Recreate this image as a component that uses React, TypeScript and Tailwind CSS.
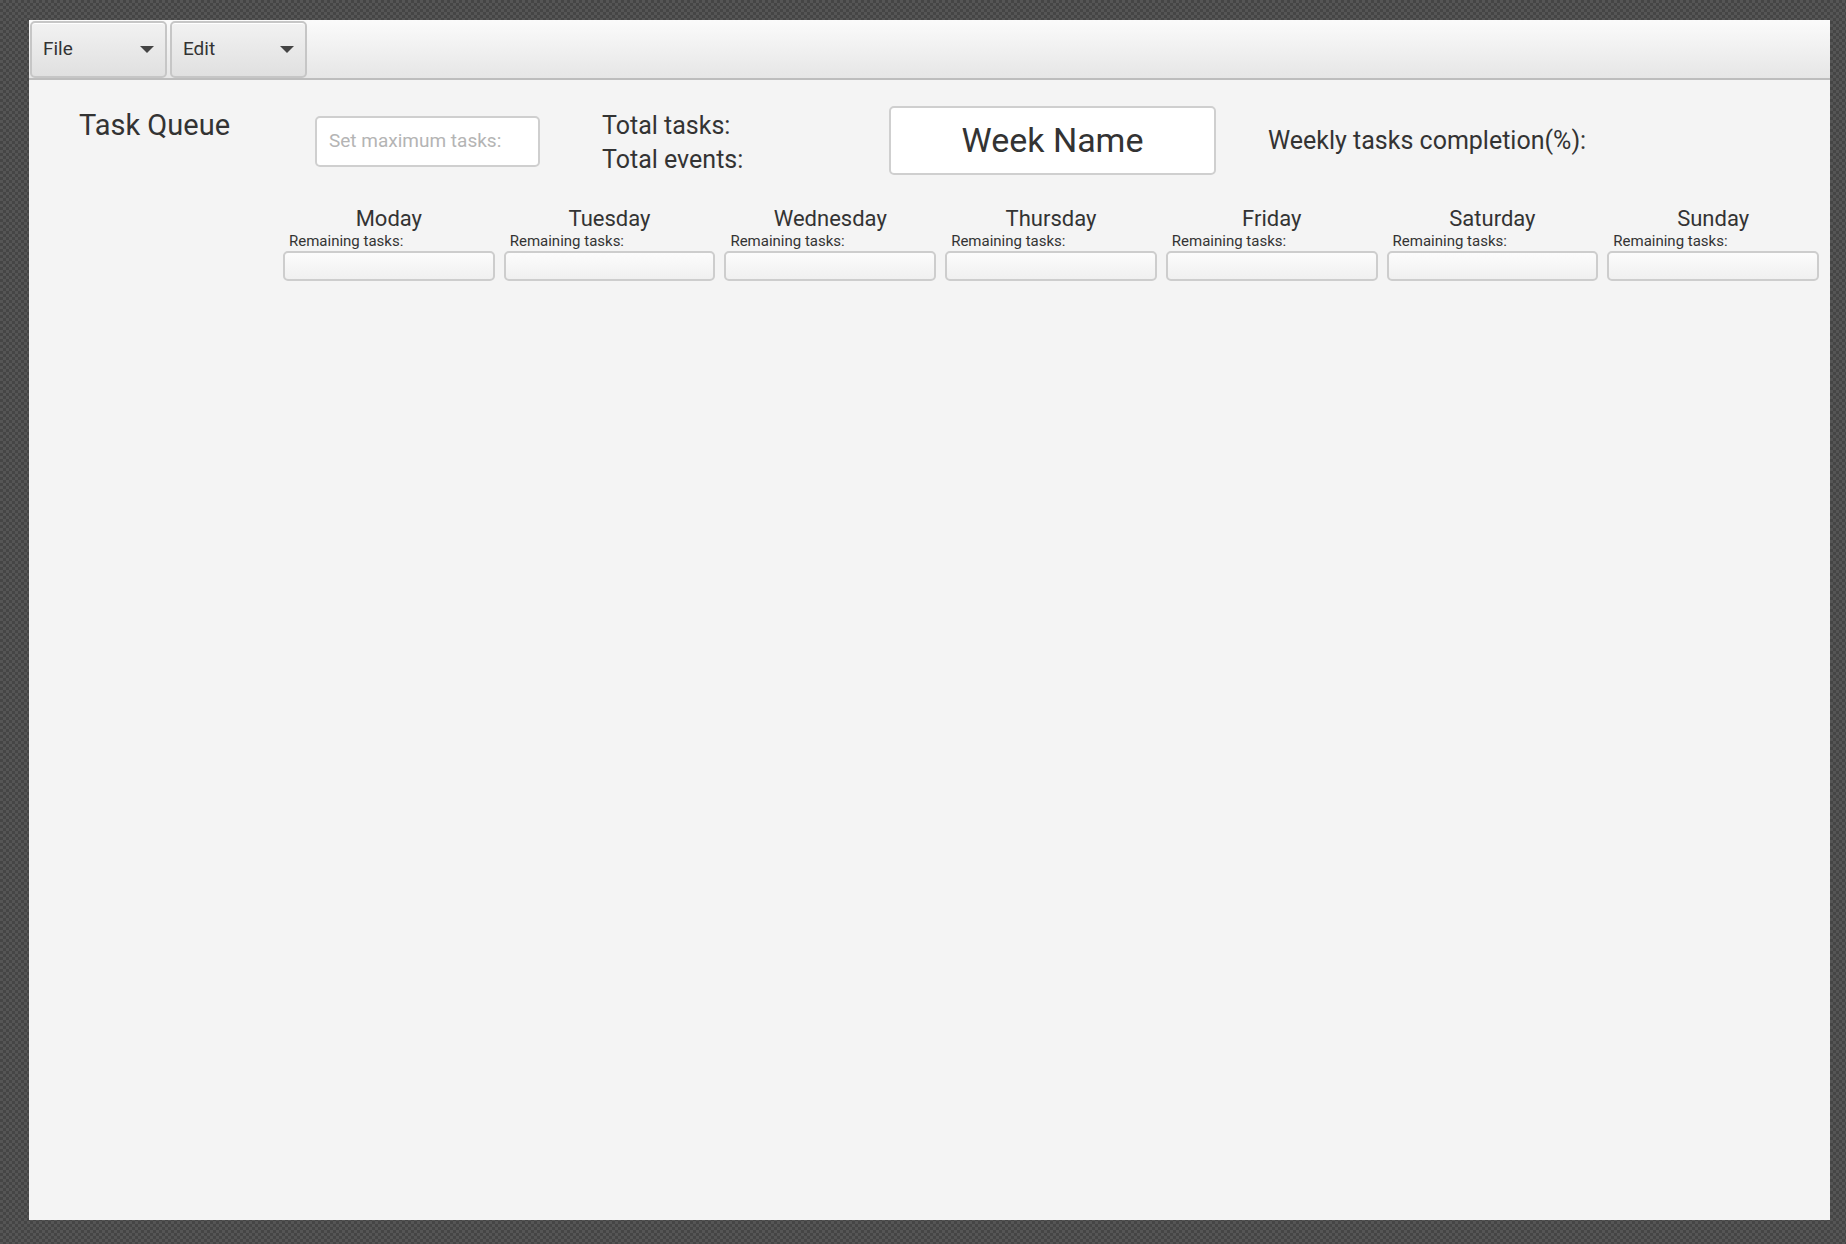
import React from 'react';

const days = ['Moday', 'Tuesday', 'Wednesday', 'Thursday', 'Friday', 'Saturday', 'Sunday'];

function MenuButton({ label }: { label: string }) {
  return (
    <div className="w-[137px] h-[57px] rounded-[5px] border-2 border-[#c6c6c6] bg-gradient-to-b from-[#f2f2f2] to-[#e0e0e0] flex items-center justify-between pl-[11px] pr-[11px] shadow-[inset_0_1px_0_#ffffff]">
      <span className="text-[19px] text-[#333]">{label}</span>
      <svg width="14" height="7" viewBox="0 0 14 7">
        <path d="M0 0 L14 0 L7 7 Z" fill="#444" />
      </svg>
    </div>
  );
}

export default function App() {
  return (
    <div className="w-[1846px] h-[1244px] pt-[20px] pl-[29px] bg-[#4b4b4b] bg-[repeating-conic-gradient(#454545_0%_25%,#555555_0%_50%)] bg-[length:6px_6px] font-['Roboto',sans-serif] text-[#333]">
      <div className="w-[1801px] h-[1200px] flex flex-col bg-[#f4f4f4]">
        {/* menu bar */}
        <div className="h-[60px] flex items-start gap-[3px] pt-[1px] pl-[1px] bg-gradient-to-b from-[#fbfbfb] to-[#e6e6e6] border-b-2 border-[#bdbdbd]">
          <MenuButton label="File" />
          <MenuButton label="Edit" />
        </div>

        {/* header row */}
        <div className="flex items-start mt-[26px] pl-[50px]">
          <div className="w-[236px] text-[29px] leading-[36px] pt-[1px]">Task Queue</div>
          <div className="w-[225px] h-[51px] mt-[10px] rounded-[5px] border-2 border-[#cfcfcf] bg-white flex items-center pl-[12px] text-[19px] text-[#b4b4b4]">
            Set maximum tasks:
          </div>
          <div className="w-[287px] ml-[62px] mt-[3px] text-[25px] leading-[34px]">
            <div>Total tasks:</div>
            <div>Total events:</div>
          </div>
          <div className="w-[327px] h-[69px] rounded-[5px] border-2 border-[#cfcfcf] bg-white flex items-center justify-center text-[34px]">
            Week Name
          </div>
          <div className="ml-[52px] mt-[18px] text-[25px] leading-[34px]">Weekly tasks completion(%):</div>
        </div>

        {/* days */}
        <div className="grid grid-cols-7 gap-x-[9px] mt-[29px] ml-[254px] mr-[11px]">
          {days.map((d) => (
            <div key={d} className="flex flex-col">
              <div className="text-center text-[22px] leading-[26px]">{d}</div>
              <div className="pl-[6px] text-[15px] leading-[19px]">Remaining tasks:</div>
              <div className="h-[30px] rounded-[5px] border-2 border-[#cdcdcd] bg-gradient-to-b from-[#fcfcfc] to-[#f0f0f0]" />
            </div>
          ))}
        </div>
      </div>
    </div>
  );
}
